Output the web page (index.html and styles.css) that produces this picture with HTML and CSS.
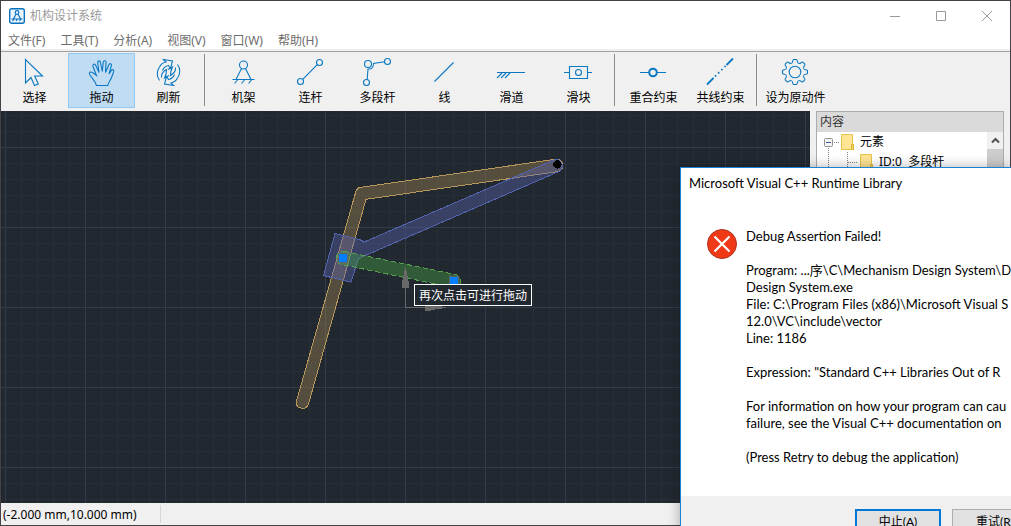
FILE: index.html
```html
<!DOCTYPE html>
<html lang="zh-CN">
<head>
<meta charset="utf-8">
<title>机构设计系统</title>
<link rel="stylesheet" href="styles.css">
</head>
<body>
<div class="app">
  <header class="titlebar">
    <svg class="app-icon" width="16" height="16" viewBox="0 0 16 16">
      <rect x=".7" y=".7" width="14.6" height="14.6" rx="2" fill="#eaf5fd" stroke="#0a72bd" stroke-width="1.4"/>
      <g fill="none" stroke="#0a72bd" stroke-width="1.2"><circle cx="8" cy="4.5" r="1.8"/><path d="M7 6.2 4.4 11M9 6.2l2.600 4.800M2.500 11h11M5 11l-1.500 2M8.500 11 7 13M12 11l-1.500 2"/></g>
    </svg>
    <h1 class="app-name">机构设计系统</h1>
    <div class="controls">
      <button type="button" aria-label="最小化"><svg width="12" height="12"><path d="M1 6.500h10"/></svg></button>
      <button type="button" aria-label="最大化"><svg width="12" height="12"><path d="M1.500 1.500h9v9h-9z"/></svg></button>
      <button type="button" aria-label="关闭"><svg width="12" height="12"><path d="m1 1 10 10M11 1 1 11"/></svg></button>
    </div>
  </header>
  <nav class="menubar">
    <button type="button">文件(F)</button>
    <button type="button">工具(T)</button>
    <button type="button">分析(A)</button>
    <button type="button">视图(V)</button>
    <button type="button">窗口(W)</button>
    <button type="button">帮助(H)</button>
  </nav>
  <div class="toolbar" role="toolbar">
    <button type="button" class="tool"><svg viewBox="0 0 33 32"><path d="M7.500 3.500v23.500l5.500-5.500 3.500 8 3.800-1.500-3.600-8h7.800z"/></svg><span>选择</span></button>
    <button type="button" class="tool active"><svg viewBox="0 0 33 32"><path d="M11.500 29.500C10.500 25.500 7 22.500 4.700 18.500 3.500 16.500 5.500 15.300 7.500 16.500L11.500 19.500 8 10.500C7.300 8 9.800 7.300 10.800 9.500L14 16.500 12.800 7C12.500 4.500 15 4 15.500 6.500L17.300 15.500 18.200 6.500c.3-2.500 3-2.300 2.800.2L20.500 16.500 23.800 9c1-2.300 3.200-1.500 2.600.7L24 18l2.200-3.300c1.200-2 3.200-.8 2.400 1.200C27.500 19 26.500 22.500 24.500 25.500c-1 1.500-1.500 2.500-1.800 4z"/></svg><span>拖动</span></button>
    <button type="button" class="tool"><svg viewBox="0 0 33 32"><g id="cycle"><path d="M7.500 11C9 8 11.500 6.500 14 6L11.500 3.500 20.500 5 18.500 12.500 16.500 9.500C14 10 11.500 12 10.500 14.500"/><path d="M7.500 24.500C4.500 20.500 4.500 15 7.500 11"/><path d="M9.500 21.500C9 17.500 11 15.500 14.500 13.500L14 18 12.500 22 17 19.500"/></g><use href="#cycle" transform="rotate(180 16.500 16.500)"/></svg><span>刷新</span></button>
    <i class="sep"></i>
    <button type="button" class="tool"><svg viewBox="0 0 33 32"><circle cx="16.500" cy="9" r="4"/><path d="M14.500 12.500 9 23.500M18.500 12.500 24 23.500M5.500 23.500h22M10.500 24l-3 3.500M17.500 24l-3 3.500M24.500 24l-3 3.500"/></svg><span>机架</span></button>
    <button type="button" class="tool"><svg viewBox="0 0 33 32"><circle cx="6.500" cy="25.500" r="3"/><circle cx="25.500" cy="6.500" r="3"/><path d="M8.700 23.300 23.300 8.700"/></svg><span>连杆</span></button>
    <button type="button" class="tool"><svg viewBox="0 0 33 32"><circle cx="7" cy="8" r="3.500"/><circle cx="5.500" cy="26.500" r="3"/><circle cx="26.500" cy="5.500" r="3"/><path d="M6.200 23.500 7 13c4 .5 5.500-2 5.500-5.500L23.500 5.800"/></svg><span>多段杆</span></button>
    <button type="button" class="tool"><svg viewBox="0 0 33 32"><path d="M6.500 25.500 25.500 6.500"/></svg><span>线</span></button>
    <button type="button" class="tool"><svg viewBox="0 0 33 32"><path d="M2 16.500h28M7 17l-5 5M11 17l-5 5M15 17l-5 5"/></svg><span>滑道</span></button>
    <button type="button" class="tool"><svg viewBox="0 0 33 32"><path d="M7.500 10.500h18v12h-18zM2 16.500h5.500M25.500 16.500H30"/><circle cx="16.500" cy="16.500" r="3"/></svg><span>滑块</span></button>
    <i class="sep"></i>
    <button type="button" class="tool"><svg viewBox="0 0 33 32"><path d="M3 16.500h9M20 16.500h9"/><circle cx="16" cy="16.500" r="3.800" stroke-width="2"/></svg><span>重合约束</span></button>
    <button type="button" class="tool"><svg viewBox="0 0 33 32"><path stroke-width="1.800" d="M3 28.500 9.500 22M22.500 9 29 2.500"/><path stroke-width="1.800" stroke-dasharray="1.500 3" d="M11 20.500 21.500 10"/></svg><span>共线约束</span></button>
    <i class="sep"></i>
    <button type="button" class="tool"><svg viewBox="0 0 33 32"><g transform="translate(16 16)"><circle r="5.800"/><path id="tooth" d="M-3.600-8.700C-2-8.700-2.600-12.400-1.400-12.500h2.800C2.600-12.400 2-8.700 3.600-8.700"/><use href="#tooth" transform="rotate(45)"/><use href="#tooth" transform="rotate(90)"/><use href="#tooth" transform="rotate(135)"/><use href="#tooth" transform="rotate(180)"/><use href="#tooth" transform="rotate(225)"/><use href="#tooth" transform="rotate(270)"/><use href="#tooth" transform="rotate(315)"/></g></svg><span>设为原动件</span></button>
  </div>
  <main class="workspace">
    <section class="canvas" aria-label="绘图区">
      <svg class="drawing" width="100%" height="100%">
        <defs>
          <pattern id="minor" x="4" y="4" width="16" height="16" patternUnits="userSpaceOnUse"><path d="M.5 0v16M0 .5h16" stroke="#272e37"/></pattern>
          <pattern id="major" x="4" y="36" width="80" height="80" patternUnits="userSpaceOnUse"><path d="M.5 0v80M0 .5h80" stroke="#343b48"/></pattern>
        </defs>
        <rect width="100%" height="100%" fill="url(#minor)"/>
        <rect width="100%" height="100%" fill="url(#major)"/>
        <g transform="translate(-1 -111)" shape-rendering="crispEdges">
          <path fill="none" stroke="#696969" d="M405.500 268v39.500H446"/>
          <path fill="#b4965a" fill-opacity=".35" stroke="#b8975a" d="M557 159 360 187.500Q357 188 356 191L296 403A6.500 6.500 0 0 0 308.500 404L366 199.300 558.500 171.500A6.500 6.500 0 0 0 557 159z"/>
          <path fill="#5a64b4" fill-opacity=".4" stroke="#5264ae" d="M335 233.500 362.500 240.500 363.500 242.300 555 159.500A6.500 6.500 0 0 1 560 171L358.500 258.500 351 282.300 323.500 275.500z"/>
          <path fill="#46a046" fill-opacity=".42" stroke="#57a04e" stroke-dasharray="5 3" d="M344.300 251.500 455.300 274.500A6.500 6.500 0 0 1 452.700 287.500L341.700 264.500A6.500 6.500 0 0 1 344.300 251.500z"/>
          <path fill="#696969" d="M405 268h1l3 15v5h-7v-5zM425 306h17v2.500l-11 1.500v1h-6z"/>
          <circle cx="557.500" cy="164.500" r="4.200" fill="#000"/>
          <path fill="#0080ff" stroke="#646464" d="M338.500 253.500h9v9h-9zM449.500 276.500h9v9h-9z"/>
        </g>
      </svg>
      <div class="hint" role="tooltip">再次点击可进行拖动</div>
    </section>
    <aside class="panel">
      <h2 class="panel-title">内容</h2>
      <div class="panel-body">
        <ul class="tree">
          <li class="node">
            <svg class="branch" width="40" height="20"><path d="M18 10.500h6M12.500 16v4" class="dots"/><rect x="8.500" y="6.500" width="8" height="8" rx="1" fill="#f4f4f4" stroke="#919191"/><path d="M10 10.500h5" stroke="#3c5aa0"/><path d="M25.500 2.500h11v10h1v5h-12z" fill="#ffe594" stroke="#e8c34c"/><path d="M35.500 17.500v-5h2v5z" fill="#f4d060" stroke="#dfb53a"/></svg>
            <span>元素</span>
          </li>
          <li class="node child">
            <svg class="branch" width="59" height="20"><path d="M12.500 0v20M31.500 0v20M32 10.500h10" class="dots"/><path d="M44.500 2.500h11v10h1v5h-12z" fill="#ffe594" stroke="#e8c34c"/><path d="M54.500 17.500v-5h2v5z" fill="#f4d060" stroke="#dfb53a"/></svg>
            <span>ID:0&nbsp; 多段杆</span>
          </li>
        </ul>
        <div class="scrollbar">
          <button type="button" aria-label="向上滚动"><svg width="9" height="7"><path d="m1 5.500 3.500-3.500L8 5.500" fill="none" stroke="#505050" stroke-width="2"/></svg></button>
          <div class="thumb"></div>
        </div>
      </div>
    </aside>
  </main>
  <footer class="statusbar"><span class="coords">(-2.000 mm,10.000 mm)</span></footer>
</div>

<div class="dialog" role="alertdialog" aria-labelledby="dialog-title">
  <h2 class="dialog-title" id="dialog-title">Microsoft Visual C++ Runtime Library</h2>
  <div class="dialog-body">
    <svg class="error-icon" width="30" height="30" viewBox="0 0 30 30"><circle cx="15" cy="15" r="14.500" fill="#f03a17" stroke="#a93620"/><path d="m7.500 7.500 15 15M22.500 7.500l-15 15" stroke="#fff" stroke-width="2.200"/></svg>
    <div class="message">
      <p>Debug Assertion Failed!</p>
      <p>Program: ...序\C\Mechanism Design System\D<br>Design System.exe<br>File: C:\Program Files (x86)\Microsoft Visual S<br>12.0\VC\include\vector<br>Line: 1186</p>
      <p>Expression: "Standard C++ Libraries Out of R</p>
      <p>For information on how your program can cau<br>failure, see the Visual C++ documentation on</p>
      <p>(Press Retry to debug the application)</p>
    </div>
  </div>
  <div class="dialog-actions">
    <button type="button" class="action primary">中止(A)</button>
    <button type="button" class="action">重试(R)</button>
  </div>
</div>
</body>
</html>
```

FILE: styles.css
```css
* { box-sizing: border-box; }

body {
  margin: 0;
  height: 100vh;
  position: relative;
  overflow: hidden;
  font: 12px/16px "Noto Sans", "Noto Sans CJK SC", sans-serif;
  color: #000;
}

h1, h2, p, ul { margin: 0; padding: 0; font-size: inherit; font-weight: normal; }
ul { list-style: none; }
button { font: inherit; color: inherit; background: none; border: 0; padding: 0; }

.app {
  height: 100%;
  display: flex;
  flex-direction: column;
  border: 1px solid #444245;
  background: #f0f0f0;
}

.titlebar {
  display: flex;
  align-items: center;
  height: 29px;
  flex: none;
  padding-left: 8px;
  background: #fff;
  color: #999;
}
.app-name { margin-left: 5px; flex: 1; }
.controls { display: flex; }
.controls button { width: 46px; height: 28px; display: grid; place-items: center; }
.controls svg { fill: none; stroke: #999; }

.menubar {
  display: flex;
  gap: 15px;
  height: 19px;
  flex: none;
  padding: 2px 7px 0;
  background: #fff;
  color: #6d6d6d;
}

.toolbar {
  display: flex;
  flex: none;
  height: 60px;
  margin-top: 2px;
  padding-top: 1px;
  border-top: 1px solid #a0a0a0;
}
.tool {
  width: 67px;
  height: 55px;
  border: 1px solid transparent;
  display: flex;
  flex-direction: column;
  align-items: center;
  gap: 2px;
  padding-top: 2px;
  white-space: nowrap;
}
.tool svg { width: 33px; height: 32px; flex: none; fill: none; stroke: #0a78c2; stroke-width: 1.1; }
.tool.active { background: #c0dcf3; border-color: #90c8f6; }
.sep { width: 1px; height: 52px; margin: 1px 5px 0 2px; background: #8c8c8c; }

.workspace { display: flex; flex: 1; min-height: 0; gap: 6px; padding-right: 6px; }
.canvas { flex: 1; min-width: 0; position: relative; overflow: hidden; background: #222830; }
.drawing { display: block; }
.hint {
  position: absolute;
  left: 413px;
  top: 173px;
  height: 22px;
  padding: 3px 4px;
  border: 1px solid #fff;
  background: #222830;
  color: #fff;
  line-height: 16px;
  white-space: nowrap;
}

.panel { width: 188px; display: flex; flex-direction: column; border: 1px solid #acacac; background: #fff; }
.panel-title { height: 20px; line-height: 20px; padding-left: 3px; background: #dadada; color: #333; }
.panel-body { flex: 1; display: flex; min-height: 0; }
.tree { flex: 1; }
.node { display: flex; align-items: center; height: 20px; white-space: nowrap; }
.node span { padding-left: 4px; }
.branch { margin-left: -1px; }
.dots { fill: none; stroke: #808080; stroke-dasharray: 1 1; }
.scrollbar { width: 16px; background: #f0f0f0; }
.scrollbar button { width: 16px; height: 17px; display: grid; place-items: center; }
.thumb { height: 120px; background: #cdcdcd; }

.statusbar { flex: none; height: 22px; display: flex; padding: 2px 0; }
.coords { width: 160px; padding-left: 2px; line-height: 20px; border-right: 1px solid #d7d7d7; }

.dialog {
  position: absolute;
  left: 680px;
  right: 0;
  top: 167px;
  overflow: hidden;
  border: 1px solid #1883d7;
  border-right: 0;
  background: #fff;
  box-shadow: 0 0 12px rgba(0, 0, 0, .3);
  font-family: Lato, "Noto Sans CJK SC", sans-serif;
  font-size: 13px;
  white-space: nowrap;
}
.dialog-title { padding: 7px 8px; }
.dialog-body { display: flex; gap: 9px; padding: 30px 0 30px 26px; }
.error-icon { flex: none; margin-top: 1px; }
.message { line-height: 17px; display: grid; gap: 17px; }
.dialog-actions { display: flex; gap: 11px; padding: 13px 0 13px 174px; background: #f0f0f0; font-size: 12px; }
.action { width: 86px; height: 26px; flex: none; background: #e1e1e1; border: 1px solid #adadad; }
.action.primary { border: 2px solid #0078d7; }
```
